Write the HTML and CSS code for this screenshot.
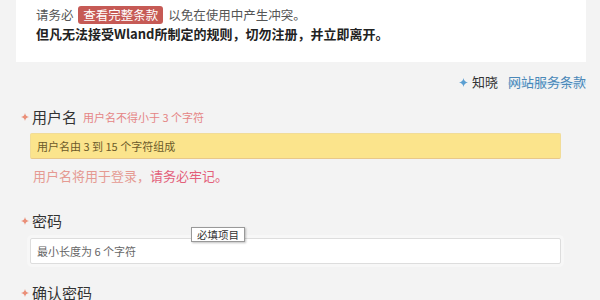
FILE: index.html
```html
<!DOCTYPE HTML>
<html lang="zh-CN">
<head>
<meta charset="utf-8">
<title>注册 - Wland</title>
<link rel="stylesheet" href="styles.css">
</head>
<body>
<div class="page">
 <!-- Terms notice -->
 <div class="notice">
  <p>请务必 <a class="terms-btn">查看完整条款</a> 以免在使用中产生冲突。</p>
  <p class="strong">但凡无法接受Wland所制定的规则，切勿注册，并立即离开。</p>
 </div>
 <div class="agree">
  <svg class="star blue" viewBox="0 0 10 10"><path d="M5 0 Q5.6 4.4 10 5 Q5.6 5.6 5 10 Q4.4 5.6 0 5 Q4.4 4.4 5 0Z"/></svg>
  <span class="agree-text">知晓</span>
  <a class="terms-link">网站服务条款</a>
 </div>
 <!-- Username -->
 <div class="field field-user">
  <div class="label">
   <svg class="star red" viewBox="0 0 10 10"><path d="M5 0 Q5.6 4.4 10 5 Q5.6 5.6 5 10 Q4.4 5.6 0 5 Q4.4 4.4 5 0Z"/></svg>
   <span class="name">用户名</span>
   <span class="hint">用户名不得小于 3 个字符</span>
  </div>
  <input class="input warn" type="text" placeholder="用户名由 3 到 15 个字符组成">
  <div class="msg">用户名将用于登录，<em>请务必牢记。</em></div>
 </div>
 <!-- Password -->
 <div class="field field-pass">
  <div class="label">
   <svg class="star red" viewBox="0 0 10 10"><path d="M5 0 Q5.6 4.4 10 5 Q5.6 5.6 5 10 Q4.4 5.6 0 5 Q4.4 4.4 5 0Z"/></svg>
   <span class="name">密码</span>
  </div>
  <input class="input" type="password" placeholder="最小长度为 6 个字符">
  <div class="tip">必填项目</div>
 </div>
 <!-- Confirm password -->
 <div class="field field-confirm">
  <div class="label">
   <svg class="star red" viewBox="0 0 10 10"><path d="M5 0 Q5.6 4.4 10 5 Q5.6 5.6 5 10 Q4.4 5.6 0 5 Q4.4 4.4 5 0Z"/></svg>
   <span class="name">确认密码</span>
  </div>
 </div>
</div>
</body>
</html>
```

FILE: styles.css
```css
body {
  margin: 0;
  padding: 0;
  background: #f3f3f3;
  font-family: "Noto Sans CJK SC", "Noto Sans", sans-serif;
  color: #333;
  overflow: hidden;
}
.page {
  margin: 0 14px 0 16px;
}
/* White box with the terms */
.notice {
  background: #fff;
  padding: 5px 20px 19px 20px;
  font-size: 12.5px;
  line-height: 19px;
  color: #555;
}
.notice p {
  margin: 0;
}
.notice .strong {
  font-size: 13px;
  font-weight: bold;
  color: #222;
}
.terms-btn {
  display: inline-block;
  background: #c65a55;
  color: #fff;
  padding: 0 5px;
  margin: 0 2px;
  border-radius: 3px;
  line-height: 18px;
}
/* "I agree" row */
.agree {
  margin-top: 10px;
  display: flex;
  justify-content: flex-end;
  align-items: center;
  line-height: 20px;
  font-size: 13px;
}
.agree-text {
  margin-left: 4px;
  color: #333;
}
.terms-link {
  margin-left: 10px;
  color: #4a88b8;
  text-decoration: underline;
  text-decoration-color: #cfe3f2;
  text-decoration-thickness: 3px;
  text-underline-offset: -5px;
}
.star {
  width: 9px;
  height: 9px;
}
.star.blue {
  fill: #5b9fd2;
}
.star.red {
  width: 8px;
  height: 8px;
  fill: #ea8f78;
}
/* Form fields */
.field {
  position: relative;
  padding-left: 14px;
  padding-right: 25px;
}
.field-user {
  margin-top: 15px;
}
.field-pass {
  margin-top: 26px;
}
.field-confirm {
  margin-top: 19px;
}
.label {
  display: flex;
  align-items: center;
  line-height: 20px;
  margin-left: -9px;
}
.label .name {
  font-size: 15px;
  margin-left: 3px;
  color: #333;
}
.label .hint {
  font-size: 11px;
  color: #e58585;
  margin-left: 6px;
}
.input {
  display: block;
  box-sizing: border-box;
  width: 100%;
  height: 26px;
  margin-top: 6px;
  padding: 0 6px;
  font-family: inherit;
  font-size: 11px;
  border: 1px solid #ddd;
  border-radius: 2px;
  background: #fff;
  box-shadow: 0 0 0 3px #f7f7f7;
  outline: none;
}
.input::placeholder {
  color: #666;
}
.field-pass .input {
  margin-top: 7px;
}
.input.warn {
  background: #fbe48c;
  border-color: #f1dc98 #f1dc98 #e8c88a;
  box-shadow: none;
}
.input.warn::placeholder {
  color: #6b5a2a;
}
.msg {
  margin-top: 8px;
  font-size: 13px;
  line-height: 18px;
  color: #e59a92;
  padding-left: 3px;
}
.msg em {
  font-style: normal;
  color: #e3607a;
}
/* Required-field bubble */
.tip {
  position: absolute;
  left: 175px;
  top: 16px;
  background: #fff;
  border: 1px solid #999;
  box-shadow: 1px 1px 2px rgba(0,0,0,0.25);
  font-size: 10.5px;
  line-height: 13px;
  padding: 0 5px;
  color: #333;
}
```
